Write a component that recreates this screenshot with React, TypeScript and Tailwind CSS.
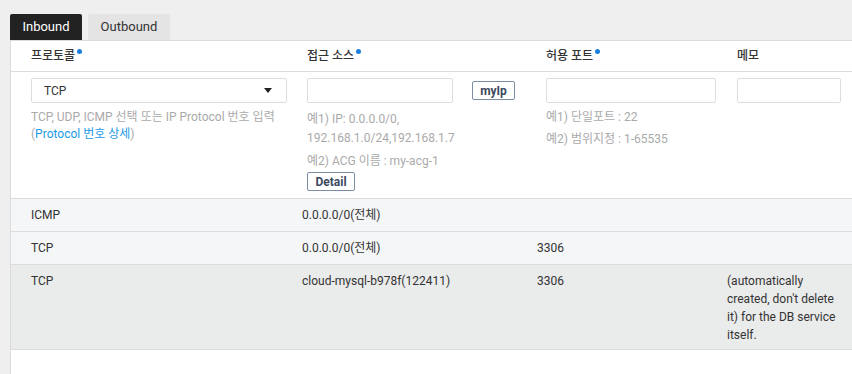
import React from 'react';

const font = { fontFamily: 'Roboto, "Noto Sans CJK KR", sans-serif' };

function Dot() {
    return <span className="ml-[2px] inline-block w-[5px] h-[5px] rounded-full bg-[#1a7fe0] align-top mt-[2px]" />
}

interface RuleRow {
    protocol: string;
    source: string;
    port: string;
    memo: string;
    active?: boolean;
}

const rows: RuleRow[] = [
    { protocol: 'ICMP', source: '0.0.0.0/0(전체)', port: '', memo: '' },
    { protocol: 'TCP', source: '0.0.0.0/0(전체)', port: '3306', memo: '' },
    { protocol: 'TCP', source: 'cloud-mysql-b978f(122411)', port: '3306', memo: "(automatically created, don't delete it) for the DB service itself.", active: true },
];

export default function App() {
    return (
        <div className="w-[852px] h-[374px] bg-[#efefef] pl-[10px] pt-[14px] overflow-hidden text-[12px] text-[#333]" style={font}>
            {/* tabs */}
            <div className="flex gap-[6px]">
                <div className="w-[72px] h-[26px] bg-[#222] text-white text-[13px] flex items-center justify-center rounded-t-[2px]">Inbound</div>
                <div className="w-[82px] h-[26px] bg-[#e4e4e4] text-[#333] text-[13px] flex items-center justify-center rounded-t-[2px]">Outbound</div>
            </div>

            <div className="bg-white border-l border-t border-[#dcdcdc] h-[334px]">
                {/* header */}
                <div className="grid grid-cols-[276px_239px_191px_1fr] pl-[20px] h-[31px] items-center border-b border-[#dcdcdc] font-medium">
                    <div>프로토콜<Dot /></div>
                    <div>접근 소스<Dot /></div>
                    <div>허용 포트<Dot /></div>
                    <div>메모</div>
                </div>

                {/* input row */}
                <div className="grid grid-cols-[276px_239px_191px_1fr] pl-[20px] pt-[6px] h-[127px] border-b border-[#dcdcdc]">
                    <div>
                        <div className="w-[256px] h-[25px] border border-[#ddd] rounded-[2px] flex items-center justify-between pl-[12px] pr-[14px]">
                            <span>TCP</span>
                            <span className="w-0 h-0 border-l-[4px] border-r-[4px] border-t-[5px] border-l-transparent border-r-transparent border-t-[#222]" />
                        </div>
                        <p className="mt-[6px] leading-[17px] text-[#aaa]">
                            TCP, UDP, ICMP 선택 또는 IP Protocol 번호 입력<br />
                            (<span className="text-[#1a9ae6]">Protocol 번호 상세</span>)
                        </p>
                    </div>
                    <div>
                        <div className="flex items-center">
                            <div className="w-[146px] h-[25px] border border-[#ddd] rounded-[2px]" />
                            <button className="ml-[19px] w-[43px] h-[19px] border border-[#7b8ca3] rounded-[2px] text-[#3c4a5e] font-bold leading-none">myIp</button>
                        </div>
                        <p className="mt-[7px] leading-[19px] text-[#aaa]">
                            예1) IP: 0.0.0.0/0,<br />192.168.1.0/24,192.168.1.7
                        </p>
                        <p className="mt-[4px] leading-[19px] text-[#aaa]">예2) ACG 이름 : my-acg-1</p>
                        <button className="mt-[1px] w-[48px] h-[19px] border border-[#7b8ca3] rounded-[2px] text-[#3c4a5e] font-bold leading-none">Detail</button>
                    </div>
                    <div>
                        <div className="w-[170px] h-[25px] border border-[#ddd] rounded-[2px]" />
                        <p className="mt-[6px] leading-[17px] text-[#aaa]">예1) 단일포트 : 22</p>
                        <p className="mt-[5px] leading-[17px] text-[#aaa]">예2) 범위지정 : 1-65535</p>
                    </div>
                    <div>
                        <div className="w-[104px] h-[25px] border border-[#ddd] rounded-[2px]" />
                    </div>
                </div>

                {/* rules */}
                {rows.map((r, i) => (
                    <div key={i} className={`grid grid-cols-[271px_235px_190px_1fr] pl-[20px] pt-[7px] leading-[18px] border-b border-[#dcdcdc] ${r.active ? 'bg-[#eaebeb] pb-[5px]' : 'bg-[#f5f6f7] pb-[7px]'}`}>
                        <div>{r.protocol}</div>
                        <div>{r.source}</div>
                        <div>{r.port}</div>
                        <div className="w-[112px]">{r.memo}</div>
                    </div>
                ))}
            </div>
        </div>
    )
}
